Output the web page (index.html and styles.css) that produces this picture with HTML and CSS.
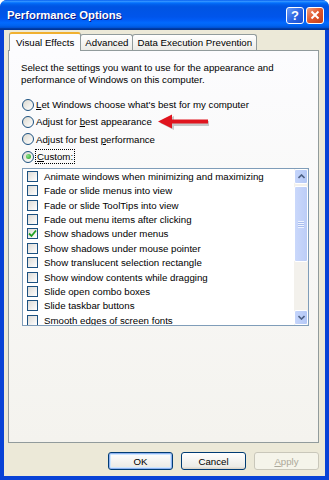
FILE: index.html
```html
<!DOCTYPE html>
<html>
  <head>
    <title>Performance Options</title>
    <link rel="stylesheet" href="styles.css">
  </head>
  <body>
    <div class="window">
      <div class="titlebar">
        <span class="title">Performance Options</span>
        <span class="tbtn help">?</span>
        <span class="tbtn close">
          <svg width="10" height="10" viewBox="0 0 10 10"><path d="M1.5 1.5 L8.5 8.5 M8.5 1.5 L1.5 8.5" stroke="#fff" stroke-width="2" /></svg>
        </span>
      </div>

      <div class="client">
        <div class="tabs">
          <div class="tab active">Visual Effects</div>
          <div class="tab">Advanced</div>
          <div class="tab">Data Execution Prevention</div>
        </div>

        <div class="panel">
          <p class="intro">Select the settings you want to use for the appearance and<br />performance of Windows on this computer.</p>

          <div class="radios">
            <label class="radio"><span class="dot"></span><span><u>L</u>et Windows choose what's best for my computer</span></label>
            <label class="radio">
              <span class="dot"></span><span>Adjust for <u>b</u>est appearance</span>
              <svg class="arrow" width="56" height="18" viewBox="0 0 56 18">
                <path d="M3 9 L17 2 L17 7 L52 7 L52 12 L17 12 L17 16 Z" fill="#8a8a8a" opacity="0.45" />
                <path d="M1 7.5 L15 0.5 L15 5.5 L51 5.5 L51 9.5 L15 9.5 L15 14.5 Z" fill="#e0141e" />
              </svg>
            </label>
            <label class="radio"><span class="dot"></span><span>Adjust for best <u>p</u>erformance</span></label>
            <label class="radio"><span class="dot checked"></span><span class="focus"><u>C</u>ustom:</span></label>
          </div>

          <div class="list">
            <div class="items">
              <div class="item"><span class="box"></span>Animate windows when minimizing and maximizing</div>
              <div class="item"><span class="box"></span>Fade or slide menus into view</div>
              <div class="item"><span class="box"></span>Fade or slide ToolTips into view</div>
              <div class="item"><span class="box"></span>Fade out menu items after clicking</div>
              <div class="item">
                <span class="box"><svg width="9" height="9" viewBox="0 0 9 9"><path d="M1 4.5 L3.5 7 L8 1.5" fill="none" stroke="#21a121" stroke-width="1.8" /></svg></span>Show shadows under menus
              </div>
              <div class="item"><span class="box"></span>Show shadows under mouse pointer</div>
              <div class="item"><span class="box"></span>Show translucent selection rectangle</div>
              <div class="item"><span class="box"></span>Show window contents while dragging</div>
              <div class="item"><span class="box"></span>Slide open combo boxes</div>
              <div class="item"><span class="box"></span>Slide taskbar buttons</div>
              <div class="item"><span class="box"></span>Smooth edges of screen fonts</div>
            </div>
            <div class="scrollbar">
              <div class="sbtn"><svg width="7" height="5" viewBox="0 0 7 5"><path d="M0.5 4 L3.5 1 L6.5 4" fill="none" stroke="#4d6185" stroke-width="1.6" /></svg></div>
              <div class="thumb"><span class="grip"></span></div>
              <div class="track"></div>
              <div class="sbtn"><svg width="7" height="5" viewBox="0 0 7 5"><path d="M0.5 1 L3.5 4 L6.5 1" fill="none" stroke="#4d6185" stroke-width="1.6" /></svg></div>
            </div>
          </div>
        </div>

        <div class="buttons">
          <button type="button" class="default">OK</button>
          <button type="button">Cancel</button>
          <button type="button" disabled><u>A</u>pply</button>
        </div>
      </div>
    </div>
  </body>
</html>
```

FILE: styles.css
```css
* {
  box-sizing: border-box;
  font-family: "Liberation Sans", Arial, sans-serif;
}
body {
  margin: 0;
  background: #fff;
}
p {
  margin: 0;
}
u {
  text-decoration: underline;
}
.window {
  width: 329px;
  height: 480px;
  display: flex;
  flex-direction: column;
  background: #0842d6;
  border-radius: 7px 7px 0 0;
  overflow: hidden;
}
.titlebar {
  height: 30px;
  display: flex;
  align-items: center;
  gap: 2px;
  padding: 0 5px 0 7px;
  background: linear-gradient(#0058ee 0%, #3593ff 4%, #288eff 6%, #127dff 8%, #036ffc 10%, #0262ee 14%, #0057e5 20%, #0054e3 24%, #0055eb 56%, #005bf5 66%, #026afe 76%, #0062ef 86%, #0052d6 92%, #0040ab 94%, #003092 100%);
}
.title {
  flex: 1;
  color: #fff;
  font-size: 11.3px;
  font-weight: bold;
  text-shadow: 1px 1px #0a1883;
}
.tbtn {
  width: 18px;
  height: 17px;
  border: 1px solid #fff;
  border-radius: 3px;
  display: flex;
  align-items: center;
  justify-content: center;
  color: #fff;
  font-size: 13px;
  font-weight: bold;
}
.help {
  background: linear-gradient(135deg, #6a9cf7, #2a63e2 55%, #1b4fd0);
}
.close {
  background: linear-gradient(135deg, #f0a080, #e0552b 50%, #c4401b);
}
.client {
  flex: 1;
  margin: 0 4px 4px;
  background: #ece9d8;
  display: flex;
  flex-direction: column;
  padding: 2px 6px 0 4px;
  font-size: 9.7px;
}
.tabs {
  display: flex;
  align-items: flex-end;
  height: 18px;
  padding-left: 1px;
  position: relative;
  z-index: 1;
}
.tab {
  height: 16px;
  padding: 0 4px;
  margin-left: -1px;
  border: 1px solid #919b9c;
  border-bottom: none;
  border-radius: 3px 3px 0 0;
  background: linear-gradient(#fff, #ecebe6);
  display: flex;
  align-items: center;
}
.tab.active {
  height: 19px;
  margin-left: 0;
  margin-bottom: -1px;
  padding: 0 6px;
  border-top: 2px solid #f0b030;
  background: #fcfcfe;
}
.panel {
  height: 393px;
  border: 1px solid #919b9c;
  background: linear-gradient(#fcfcfe, #f4f3ee);
  padding: 11px 10px 0 12px;
}
.intro {
  line-height: 12px;
}
.radios {
  margin-top: 10px;
  display: flex;
  flex-direction: column;
}
.radio {
  height: 17.3px;
  display: flex;
  align-items: center;
  gap: 2px;
  padding-left: 1px;
}
.dot {
  width: 12px;
  height: 12px;
  border: 1px solid #1c5180;
  border-radius: 50%;
  background: linear-gradient(135deg, #dcd9cf, #fff);
  display: flex;
  align-items: center;
  justify-content: center;
}
.dot.checked::after {
  content: "";
  width: 5px;
  height: 5px;
  border-radius: 50%;
  background: radial-gradient(circle at 35% 35%, #8ee28e, #21a121);
}
.focus {
  outline: 1px dotted #000;
  padding: 1px 1px;
}
.arrow {
  margin-left: 3px;
  margin-top: 3px;
}
.list {
  margin: 3px 0 0 1px;
  width: 287px;
  height: 158px;
  border: 1px solid #7f9db9;
  background: #fff;
  display: flex;
}
.items {
  flex: 1;
  padding-left: 4px;
  overflow: hidden;
}
.item {
  height: 14.4px;
  display: flex;
  align-items: center;
  gap: 6px;
  white-space: nowrap;
}
.box {
  width: 11px;
  height: 11px;
  flex: none;
  border: 1px solid #1c5180;
  background: linear-gradient(135deg, #dcdad5, #fff);
  display: flex;
  align-items: center;
  justify-content: center;
}
.scrollbar {
  width: 14px;
  display: flex;
  flex-direction: column;
  background: #f3f1ec;
}
.sbtn {
  height: 15px;
  border: 1px solid #fff;
  border-radius: 2px;
  background: linear-gradient(90deg, #c5d5fb, #b4c8f6);
  display: flex;
  align-items: center;
  justify-content: center;
}
.thumb {
  height: 76px;
  margin-top: 2px;
  border: 1px solid #fff;
  border-radius: 2px;
  background: linear-gradient(90deg, #cad8fb, #bccdf7);
  display: flex;
  align-items: center;
  justify-content: center;
}
.grip {
  width: 6px;
  height: 7px;
  background: repeating-linear-gradient(#eef3fe 0 1px, #a8bdee 1px 2px);
}
.track {
  flex: 1;
}
.buttons {
  display: flex;
  justify-content: flex-end;
  gap: 8px;
  margin-top: 9px;
}
button {
  width: 65px;
  height: 18px;
  border: 1px solid #003c74;
  border-radius: 3px;
  background: linear-gradient(#fff, #ecebe6 85%, #d6d0c5);
  font-size: 9.7px;
  color: #000;
  padding: 0;
}
button.default {
  box-shadow: inset 0 0 0 1px #8fb2f0, inset 0 0 0 2px #cee7ff;
}
button:disabled {
  border-color: #c9c7ba;
  background: #f5f4ea;
  color: #aca899;
}
```
